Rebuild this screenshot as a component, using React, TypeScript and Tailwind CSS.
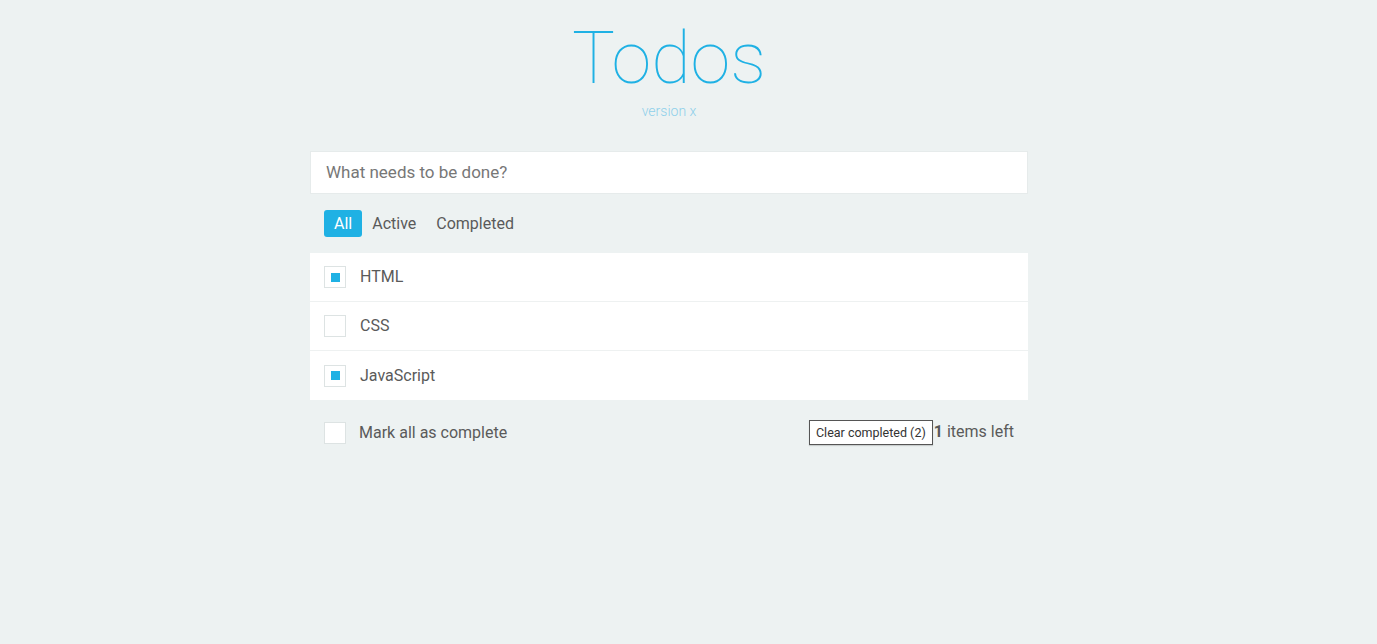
import { useState } from "react";

type Todo = { id: number; title: string; done: boolean };

const initialTodos: Todo[] = [
  { id: 1, title: "HTML", done: true },
  { id: 2, title: "CSS", done: false },
  { id: 3, title: "JavaScript", done: true },
];

function Check({ checked }: { checked: boolean }) {
  return (
    <span className="flex h-[22px] w-[22px] shrink-0 items-center justify-center border border-[#dde3e3] bg-white">
      {checked ? <span className="h-[9px] w-[9px] bg-[#1fb1e4]" /> : null}
    </span>
  );
}

export default function App() {
  const [todos] = useState<Todo[]>(initialTodos);
  const left = todos.filter((t) => !t.done).length;
  const completed = todos.length - left;

  return (
    <main className="min-h-screen bg-[#edf2f2] font-['Roboto',sans-serif] text-[#5a5a5a]">
      <div className="ml-[310px] w-[718px] pt-[19px]">
        <header className="flex flex-col items-center">
          <h1 className="text-[72px] font-thin leading-[80px] text-[#1fb1e4]">Todos</h1>
          <p className="mt-[3px] text-[14px] font-light leading-[18px] text-[#8fd0ea]">version x</p>
        </header>

        <div className="mt-[31px] h-[43px] border border-[#e6ebeb] bg-white px-[15px] text-[17px] leading-[41px] text-[#777]">
          What needs to be done?
        </div>

        <nav className="mt-[16px] flex items-center gap-[10px] pl-[14px] text-[16px]">
          <span className="rounded-[3px] bg-[#1fb1e4] px-[10px] py-[3px] leading-[21px] text-white">All</span>
          <span className="leading-[27px]">Active</span>
          <span className="ml-[10px] leading-[27px]">Completed</span>
        </nav>

        <ul className="mt-[16px] bg-white">
          {todos.map((todo, i) => (
            <li
              key={todo.id}
              className={`flex h-[49px] items-center gap-[14px] px-[14px] text-[16px] ${
                i < todos.length - 1 ? "border-b border-[#eef1f1]" : ""
              }`}
            >
              <Check checked={todo.done} />
              <span>{todo.title}</span>
            </li>
          ))}
        </ul>

        <footer className="mt-[20px] flex items-center pl-[14px] pr-[14px] text-[16px]">
          <Check checked={false} />
          <span className="ml-[13px]">Mark all as complete</span>
          <div className="ml-auto flex items-center">
            <button className="h-[25px] border border-[#555] bg-white px-[6px] text-[12.5px] leading-[21px] text-[#333] shadow-[0_1px_1px_rgba(0,0,0,0.15)]">
              Clear completed ({completed})
            </button>
            <span className="ml-[1px] -mt-[2px]">
              <b className="font-bold">{left}</b> items left
            </span>
          </div>
        </footer>
      </div>
    </main>
  );
}
